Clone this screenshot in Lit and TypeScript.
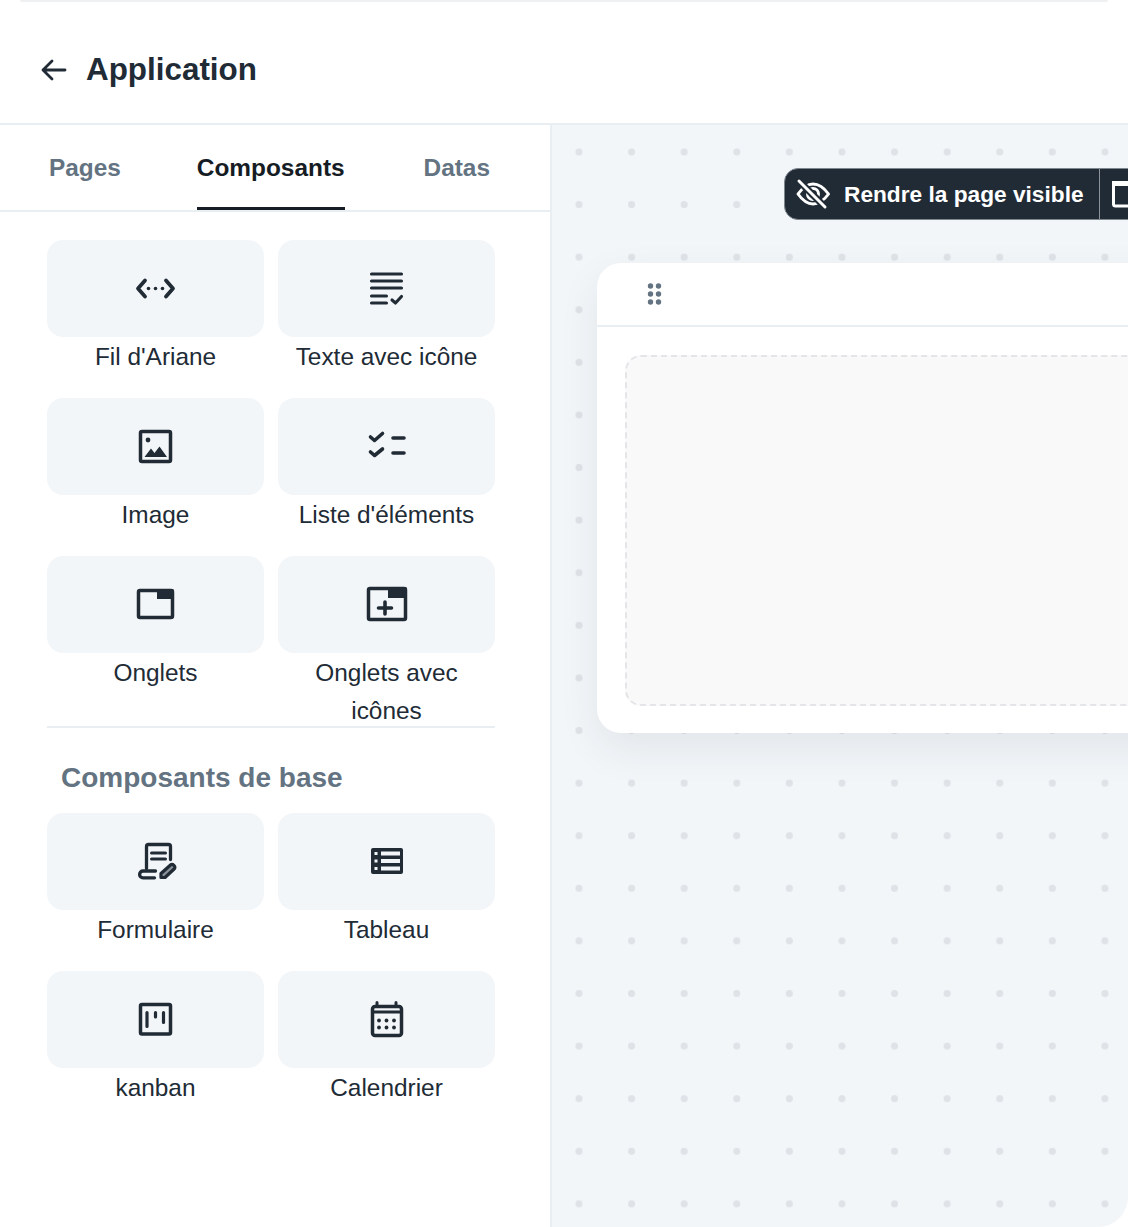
import { LitElement, html, css, svg } from "lit";
import { customElement } from "lit/decorators.js";

const C = "#212b36";
const S = (inner: unknown) => html`<svg class="ico" viewBox="0.5 0.5 48 48" width="48" height="48" fill="none" stroke=${C} stroke-width="3.500" stroke-linecap="round" stroke-linejoin="round">${inner}</svg>`;

const icons: Record<string, unknown> = {
  crumb: S(svg`<path stroke-width="3.800" d="M13.500 16 6.500 24l7 8M34.500 16l7 8-7 8"/><g fill=${C} stroke="none"><circle cx="17" cy="24" r="1.800"/><circle cx="24" cy="24" r="1.800"/><circle cx="31" cy="24" r="1.800"/></g>`),
  text: S(svg`<path stroke-width="3.100" d="M9 9.500h30M9 16.500h30M9 23.500h30M9 31.500h15M9 38.500h15"/><path stroke-width="3.100" d="M29.500 35.500l3.500 3 6-6.500"/>`),
  image: S(svg`<rect x="9" y="9" width="30" height="30" rx="1.500"/><circle cx="16.500" cy="17.500" r="2.400" fill=${C} stroke="none"/><path fill=${C} stroke="none" d="M13 34.500l6.500-8.500 3.500 4.500 5-6.500 7.500 10.500z"/>`),
  list: S(svg`<path stroke-width="3.600" d="M8 14.500l4 3.500 8-7M8 29.500l4 3.500 8-6.500M30.500 15.500h11M30.500 30.500h11"/>`),
  tabs: S(svg`<rect x="7" y="10" width="34" height="27" rx="1.500"/><path fill=${C} stroke="none" d="M25.500 8.500H40.500a2 2 0 0 1 2 2V18.500H25.500z"/>`),
  tabsPlus: S(svg`<rect x="6" y="8" width="37" height="31" rx="1.500"/><path fill=${C} stroke="none" d="M25.500 6.500H42.500a2 2 0 0 1 2 2V17.500H25.500z"/><path stroke-width="3.600" d="M16 27.500h13M22.500 21.500v12"/>`),
  form: S(svg`<path stroke-width="3.300" d="M15 31V9a2 2 0 0 1 2-2h20a2 2 0 0 1 2 2v13"/><path stroke-width="3.300" d="M24 33.500H11.500a3.300 3.300 0 0 0 0 6.800H23"/><path stroke-width="3" d="M20 15.500h14M20 21.500h14"/><path stroke-width="3.200" fill="#8a929a" d="M29.500 40v-4l9.500-8.500a2 2 0 0 1 3 0l.8 1a2 2 0 0 1-.2 3L33.500 40z"/>`),
  table: S(svg`<rect x="8.500" y="10.500" width="32" height="26" rx="2" fill=${C} stroke="none"/><g fill="#f3f6f9" stroke="none"><rect x="18.500" y="14" width="19" height="4"/><rect x="18.500" y="21.500" width="19" height="4"/><rect x="18.500" y="29" width="19" height="4"/><rect x="12" y="14.500" width="3" height="3"/><rect x="12" y="22" width="3" height="3"/><rect x="12" y="29.500" width="3" height="3"/></g>`),
  kanban: S(svg`<rect x="9" y="9" width="30" height="29.500" rx="1.500"/><path stroke-width="3.200" d="M15.500 17v14M24 17v4.500M32 17v10"/>`),
  calendar: S(svg`<rect x="10" y="11" width="29" height="29" rx="2.500"/><path stroke-width="3" d="M14.500 7v3M33.500 7v3M10 16.500h29"/><g fill=${C} stroke="none"><circle cx="16.500" cy="25" r="1.900"/><circle cx="24" cy="25" r="1.900"/><circle cx="31.500" cy="25" r="1.900"/><circle cx="16.500" cy="32" r="1.900"/><circle cx="24" cy="32" r="1.900"/><circle cx="31.500" cy="32" r="1.900"/></g>`),
};

const top = [
  ["crumb", "Fil d'Ariane"],
  ["text", "Texte avec icône"],
  ["image", "Image"],
  ["list", "Liste d'éléments"],
  ["tabs", "Onglets"],
  ["tabsPlus", "Onglets avec icônes"],
];
const base = [
  ["form", "Formulaire"],
  ["table", "Tableau"],
  ["kanban", "kanban"],
  ["calendar", "Calendrier"],
];

@customElement("app-root")
export class AppRoot extends LitElement {
  static styles = css`
    :host {
      display: block;
      width: 1128px;
      height: 1227px;
      overflow: hidden;
      background: #fff;
      color: #212b36;
      font-family: "Liberation Sans", Arial, sans-serif;
    }
    .strip { height: 1.5px; margin: 0 20px; background: #eef0f1; border-radius: 0 0 8px 8px; }
    .head {
      display: flex;
      align-items: center;
      gap: 19px;
      padding: 16px 0 0 41px;
      border-bottom: 2px solid #e9eef2;
      box-sizing: border-box;
      height: 123.500px;
    }
    .head svg { display: block; }
    .title { font-size: 31.400px; font-weight: 700; line-height: 40px; }
    .main { display: flex; height: 1102px; }
    .side { width: 550px; flex: none; border-right: 2px solid #e9eef2; }
    .tabs {
      height: 85px;
      display: flex;
      justify-content: space-between;
      padding: 0 60px 0 49px;
      border-bottom: 2px solid #e9eef2;
    }
    .tab {
      font-size: 24.400px;
      font-weight: 700;
      line-height: 85px;
      color: #637381;
      height: 85px;
      box-sizing: border-box;
    }
    .tab.on { color: #161c24; border-bottom: 3px solid #161c24; margin-right: 3px; }
    .grid {
      display: grid;
      grid-template-columns: 217px 217px;
      grid-auto-rows: 136px;
      gap: 22px 14px;
      padding-left: 47px;
    }
    .grid.first { padding-top: 28px; }
    .cell { display: flex; flex-direction: column; align-items: center; }
    .box {
      width: 217px;
      height: 97px;
      flex: none;
      background: #f3f6f9;
      border-radius: 16px;
      display: flex;
      align-items: center;
      justify-content: center;
    }
    .ico { display: block; }
    .label {
      margin-top: 1px;
      font-size: 24.400px;
      line-height: 38px;
      text-align: center;
      width: 190px;
      flex: none;
    }
    .rule { height: 2px; margin: 34px 55px 0 47px; background: #e9eef2; }
    .sect {
      margin: 30px 0 15px 61px;
      font-size: 28px;
      font-weight: 700;
      line-height: 40px;
      color: #637381;
    }
    .canvas {
      flex: 1;
      min-width: 0;
      overflow: hidden;
      border-radius: 0 0 30px 0;
      background-color: #f3f6f9;
      background-image: radial-gradient(circle, #dfe3e8 3.400px, transparent 3.900px);
      background-size: 52.600px 52.600px;
      background-position: 0.700px 0.700px;
      padding-top: 43px;
    }
    .bar {
      margin-left: 232px;
      width: 500px;
      height: 52px;
      box-sizing: border-box;
      display: flex;
      align-items: center;
      background: #212b36;
      border: 1px solid #7e868e;
      border-radius: 14px;
      color: #fff;
    }
    .btn {
      display: flex;
      align-items: center;
      gap: 13px;
      width: 315px;
      height: 100%;
      flex: none;
      box-sizing: border-box;
      padding-left: 10px;
      border-right: 1px solid #8b9299;
      font-size: 22.700px;
      font-weight: 700;
      white-space: nowrap;
    }
    .btn svg, .tabi { display: block; flex: none; }
    .tabi { margin-left: 12px; }
    .card {
      margin: 43px 0 0 45px;
      width: 800px;
      height: 470px;
      box-sizing: border-box;
      background: #fff;
      border-radius: 24px;
      box-shadow: 0 16px 40px rgba(33, 43, 54, 0.08);
    }
    .card-top {
      height: 64px;
      box-sizing: border-box;
      border-bottom: 2px solid #e9eef2;
      padding: 19px 0 0 50px;
    }
    .card-top svg { display: block; }
    .drop {
      margin: 28px 0 0 28px;
      height: 351px;
      box-sizing: border-box;
      background: #f9f9f9;
      border: 2px dashed #e3e5e8;
      border-radius: 16px;
    }
  `;

  private cells(items: string[][]) {
    return items.map(
      ([ic, name]) => html`<div class="cell"><div class="box">${icons[ic]}</div><div class="label">${name}</div></div>`
    );
  }

  render() {
    return html`
      <div class="strip"></div>
      <header class="head">
        <svg width="26" height="26" viewBox="0 0 26 26" fill="none" stroke=${C} stroke-width="2.800" stroke-linecap="round" stroke-linejoin="round"><path d="M2 13h22M11 4l-9 9 9 9"/></svg>
        <div class="title">Application</div>
      </header>
      <div class="main">
        <aside class="side">
          <nav class="tabs">
            <div class="tab">Pages</div>
            <div class="tab on">Composants</div>
            <div class="tab">Datas</div>
          </nav>
          <div class="grid first">${this.cells(top)}</div>
          <div class="rule"></div>
          <div class="sect">Composants de base</div>
          <div class="grid">${this.cells(base)}</div>
        </aside>
        <section class="canvas">
          <div class="bar">
            <div class="btn">
              <svg width="36" height="36" viewBox="0 0 36 36" fill="none" stroke="#fff" stroke-width="3" stroke-linecap="round" stroke-linejoin="round">
                <path d="M3 18c5-7 10-10 15-10s10.500 3 15.500 10c-5 7-10.500 10-15.500 10S8 25 3 18z"/>
                <circle cx="18" cy="18" r="5.500"/>
                <path stroke="#212b36" stroke-width="7" d="M5 6l25 25"/>
                <path d="M4 5l26 26"/>
              </svg>
              <span>Rendre la page visible</span>
            </div>
            <svg class="tabi" width="30" height="28" viewBox="0 0 30 28" fill="none" stroke="#fff" stroke-width="3"><rect x="1.500" y="3" width="30" height="23" rx="2"/><path stroke-width="5" d="M0 3.500h30"/></svg>
          </div>
          <div class="card">
            <div class="card-top">
              <svg width="16" height="24" viewBox="0 0 16 24" fill="#637381"><circle cx="3.500" cy="4" r="2.700"/><circle cx="11.500" cy="4" r="2.700"/><circle cx="3.500" cy="12" r="2.700"/><circle cx="11.500" cy="12" r="2.700"/><circle cx="3.500" cy="20" r="2.700"/><circle cx="11.500" cy="20" r="2.700"/></svg>
            </div>
            <div class="drop"></div>
          </div>
        </section>
      </div>
    `;
  }
}
